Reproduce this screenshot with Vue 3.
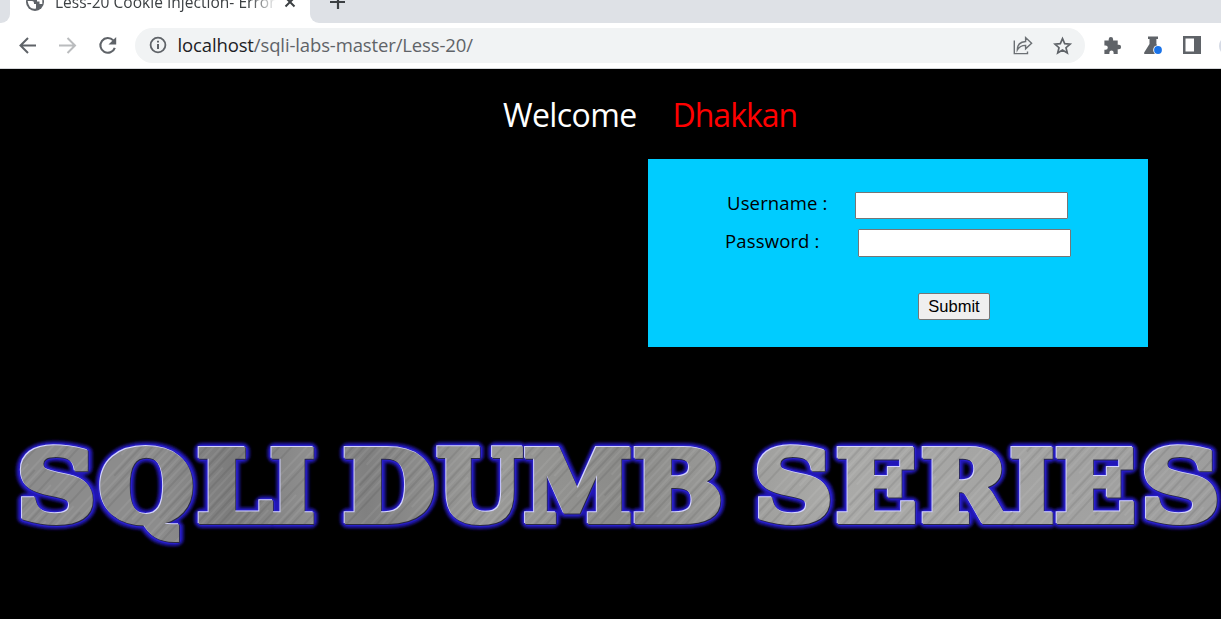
<script setup>
const letters = [
  { c: 'S', x: 17, w: 79 }, { c: 'Q', x: 99, w: 95 }, { c: 'L', x: 197, w: 75 }, { c: 'I', x: 270, w: 45 },
  { c: 'D', x: 343, w: 92 }, { c: 'U', x: 437, w: 85 }, { c: 'M', x: 524, w: 108 }, { c: 'B', x: 633, w: 90 },
  { c: 'S', x: 754, w: 79 }, { c: 'E', x: 836, w: 81 }, { c: 'R', x: 921, w: 88 }, { c: 'I', x: 1010, w: 44 },
  { c: 'E', x: 1055, w: 81 }, { c: 'S', x: 1141, w: 79 }
]
const layers = ['glow', 'halo', 'shade', 'light', 'metal']
</script>

<template>
  <div class="window">
    <div class="tabs">
      <div class="previous"></div>
      <div class="tab">
        <svg class="globe" width="20" height="20" viewBox="0 0 20 20"><circle cx="10" cy="10" r="9" fill="#5f6368"/><path d="M2.6 9H7Q9 9 9 11V12H11V16.5Q4 18 2.6 9M9 2V6H12V9.5H14.5V12H17.3V8Q15 3 9 2" fill="#fff"/></svg>
        <span class="title">Less-20 Cookie Injection- Error</span>
        <svg class="close" width="12" height="12" viewBox="0 0 12 12"><path d="M1.5 1.5 10.5 10.5M10.5 1.5 1.5 10.5" stroke="#3c4043" stroke-width="2"/></svg>
      </div>
      <div class="rest"><svg width="16" height="16" viewBox="0 0 16 16"><path d="M8 0V15M0 8H15" stroke="#3c4043" stroke-width="2.2"/></svg></div>
    </div>
    <div class="toolbar">
      <svg class="nav" width="20" height="20" viewBox="0 0 20 20"><path d="M18 9.5H3M10 2 2.5 9.5 10 17" fill="none" stroke="#5f6368" stroke-width="2"/></svg>
      <svg class="nav" width="20" height="20" viewBox="0 0 20 20"><path d="M1 9.5H17M9.5 2 17 9.5 9.5 17" fill="none" stroke="#babcbe" stroke-width="2"/></svg>
      <svg class="nav" width="20" height="20" viewBox="0 0 20 20"><path d="M15.3 4.4A7.4 7.4 0 1 0 16.8 11.8" fill="none" stroke="#5f6368" stroke-width="2.1"/><path d="M18.2 1V8.4H10.5Z" fill="#5f6368"/></svg>
      <div class="address">
        <svg class="info" width="18" height="18" viewBox="0 0 18 18"><circle cx="9" cy="9" r="7.4" fill="none" stroke="#5f6368" stroke-width="1.8"/><path d="M9 8V13M9 4.7V6.5" stroke="#5f6368" stroke-width="2"/></svg>
        <span class="url"><b>localhost</b>/sqli-labs-master/Less-20/</span>
        <svg class="share" width="20" height="20" viewBox="0 0 20 20"><path d="M1.3 4.5V17.6H14.5V15.5M4.3 14C4.3 8 7.5 5.8 12.6 5.5V1.6L18.6 7.3 12.6 12.8V9.4C8.7 9.4 6 11 4.3 14Z" fill="none" stroke="#6c7074" stroke-width="1.4"/></svg>
        <svg class="star" width="20" height="20" viewBox="0 0 20 20"><path d="M9.5 2.6 11.7 7.6 17.1 8.1 13 11.7 14.3 17 9.5 14.1 4.7 17 6 11.7 1.9 8.1 7.3 7.6Z" fill="none" stroke="#5f6368" stroke-width="1.7"/></svg>
      </div>
      <svg class="puzzle" width="20" height="20" viewBox="0 0 20 20"><path d="M2.4 4.5H6.7V3.2A2.2 2.2 0 0 1 11.1 3.2V4.5H15.7V8.8H16.9A2.2 2.2 0 0 1 16.9 13.2H15.7V18H11.6V16.6A2.1 2.1 0 0 0 7.4 16.6V18H2.4V13.8H3.6A2.2 2.2 0 0 0 3.6 9.4H2.4Z" fill="#5f6368"/></svg>
      <svg class="flask" width="20" height="20" viewBox="0 0 20 20"><path d="M5 .5H15V3H13.4V8L18 16.5Q18.5 18 17 18H2Q.5 18 1.2 16.5L6.5 8V3H5Z" fill="#5f6368"/><circle cx="15" cy="14" r="4.8" fill="#fff"/><circle cx="15" cy="14" r="3.9" fill="#1a73e8"/></svg>
      <svg class="panel" width="18" height="18" viewBox="0 0 18 18"><path fill-rule="evenodd" d="M0 0H18V18H0ZM2.5 2.5V15.5H11V2.5Z" fill="#5f6368"/></svg>
      <div class="avatar"></div>
    </div>
    <main>
      <h1><span>Welcome</span><span class="name">Dhakkan</span></h1>
      <form @submit.prevent>
        <label class="row"><span class="user">Username :</span><input type="text"></label>
        <label class="row second"><span class="pass">Password :</span><input type="password"></label>
        <button type="submit">Submit</button>
      </form>
      <svg class="banner" width="1221" height="140" viewBox="0 420 1221 140">
        <defs>
          <linearGradient id="steel" x1="0" x2="1221" y1="0" y2="0" gradientUnits="userSpaceOnUse">
            <stop offset="0" stop-color="#8c8c8c"/><stop offset=".13" stop-color="#8c8c8c"/><stop offset=".19" stop-color="#7c7c7c"/><stop offset=".26" stop-color="#909090"/><stop offset=".3" stop-color="#808080"/><stop offset=".4" stop-color="#9a9a98"/><stop offset=".51" stop-color="#8b8b89"/><stop offset=".68" stop-color="#aaaaa8"/><stop offset="1" stop-color="#9d9d9d"/>
          </linearGradient>
          <pattern id="metal" width="1221" height="619" patternUnits="userSpaceOnUse">
            <rect width="1221" height="619" fill="url(#steel)"/>
            <rect width="1221" height="619" fill="url(#brush)"/>
          </pattern>
          <pattern id="brush" width="31" height="160" patternUnits="userSpaceOnUse" patternTransform="rotate(43)">
            <path d="M2 0V160M9 0V160M17 30V130M27 0V90" stroke="#fff" stroke-opacity=".13"/>
            <path d="M5 0V110M13 0V160M22 0V160" stroke="#000" stroke-opacity=".15"/>
          </pattern>
          <filter id="soft" x="-5%" y="-20%" width="110%" height="140%"><feGaussianBlur stdDeviation="1.8"/></filter>
        </defs>
        <g v-for="layer in layers" :key="layer" :class="layer">
          <text v-for="l in letters" :key="l.x" :x="l.x" y="521" :textLength="l.w" lengthAdjust="spacingAndGlyphs">{{ l.c }}</text>
        </g>
      </svg>
    </main>
  </div>
</template>

<style>
html, body { margin: 0; overflow: hidden; }
</style>

<style scoped>
.window { width: 1221px; height: 619px; overflow: hidden; background: #000; font-family: "Open Sans", "Noto Sans", sans-serif; }
.tabs { height: 23px; display: flex; background: #fff; }
.previous { width: 10px; background: #dee1e6; border-radius: 0 0 9px 0; }
.tab { width: 300px; display: flex; }
.globe { margin: -8px 0 0 15px; flex: none; }
.title { margin: -10px 0 0 10px; width: 227px; flex: none; white-space: nowrap; font-size: 15.5px; line-height: 24px; letter-spacing: .03px; color: #3c4043; mask-image: linear-gradient(90deg, #000 195px, transparent 222px); }
.close { margin: -4px 0 0 2px; flex: none; }
.rest { flex: 1; background: #dee1e6; border-radius: 0 0 0 9px; }
.rest svg { display: block; margin: -6px 0 0 20px; }
.toolbar { height: 45px; background: #fff; border-bottom: 1px solid #d5d7da; display: flex; align-items: center; box-sizing: content-box; }
.toolbar > svg { flex: none; }
.nav { margin-left: 18px; margin-right: 2px; }
.address { margin-left: 15px; width: 950px; height: 35px; flex: none; border-radius: 18px; background: #f1f3f4; display: flex; align-items: center; box-sizing: border-box; padding: 0 12px 0 14px; }
.info { margin-top: -1px; }
.url { margin: -2px 0 0 10.5px; font-size: 18.5px; letter-spacing: -.13px; color: #5f6368; white-space: nowrap; }
.url b { font-weight: 400; color: #202124; }
.share { margin-left: auto; margin-right: 20px; }
.puzzle { margin-left: 17px; }
.flask { margin-left: 21px; }
.panel { margin-left: 20px; margin-top: -1px; }
.avatar { margin-left: 18px; width: 20px; height: 20px; border-radius: 50%; background: #d5dae5; flex: none; }
main { height: 550px; overflow: hidden; }
h1 { margin: 21px 0 0 503px; height: 50px; line-height: 50px; font-size: 32px; letter-spacing: -.6px; font-weight: 400; color: #fff; display: flex; white-space: nowrap; }
h1 span { width: 169.5px; }
h1 .name { color: #f00; letter-spacing: -1px; }
form { margin: 19px 0 0 648px; width: 500px; height: 188px; box-sizing: border-box; padding: 33px 0 0 77px; background: #0cf; color: #000; font-size: 18.5px; letter-spacing: .15px; }
.row { display: flex; height: 27px; line-height: 22px; }
.row.second { margin-top: 10px; height: 28px; line-height: 24px; }
.user { width: 128px; padding-left: 2px; white-space: nowrap; }
.pass { width: 133px; white-space: nowrap; }
input { width: 213px; height: 100%; box-sizing: border-box; border: 1px solid #767676; border-radius: 1px; background: #fff; padding: 0; margin: 0; }
button { display: block; margin: 36px 0 0 193px; width: 72px; height: 27px; border: 1px solid #767676; border-radius: 2px; background: #efefef; color: #000; padding: 0; font: 16.5px/23px "Liberation Sans", Arial, sans-serif; }
.banner { display: block; margin-top: 73px; font-family: "DejaVu Serif", serif; font-weight: 700; font-size: 97px; stroke-linejoin: miter; stroke-miterlimit: 1.5; }
.glow { fill: #2418b8; stroke: #2418b8; stroke-width: 14px; stroke-linejoin: round; filter: url(#soft); }
.halo { fill: #2920c8; stroke: #2920c8; stroke-width: 10px; stroke-linejoin: round; }
.shade { fill: #292944; stroke: #292944; stroke-width: 6px; transform: translate(.8px, .8px); }
.light { fill: #d4d4ff; stroke: #d4d4ff; stroke-width: 6px; transform: translate(-1px, -1px); }
.metal { fill: url(#metal); stroke: url(#metal); stroke-width: 6px; }
</style>
